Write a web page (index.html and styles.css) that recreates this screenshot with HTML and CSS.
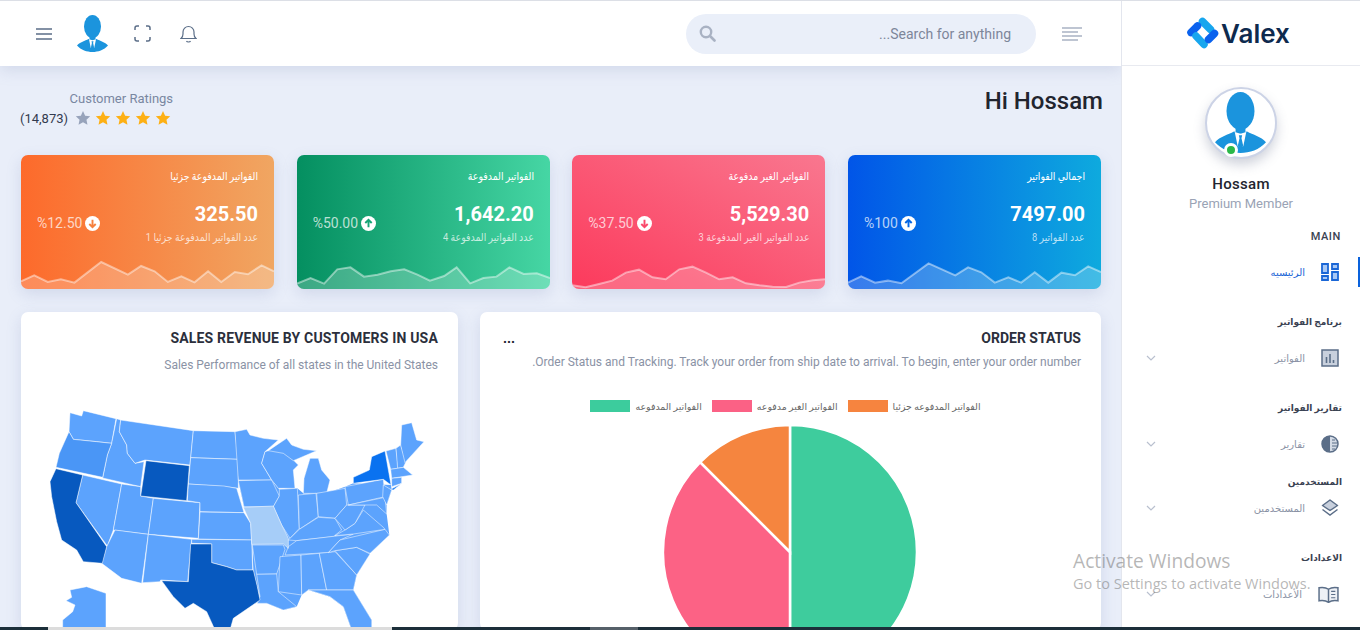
FILE: index.html
```html
<!DOCTYPE html>
<html lang="en">
<head>
<meta charset="utf-8">
<title>Valex Dashboard</title>
<link rel="stylesheet" href="styles.css">
</head>
<body>
<svg class="defs" width="0" height="0" aria-hidden="true">
  <symbol id="man" viewBox="0 0 31 37">
    <ellipse cx="15.5" cy="11.5" rx="8.5" ry="11.5" fill="#1b94dd"/>
    <path d="M12.5 19h6v6h-6z" fill="#1b94dd"/>
    <path d="M0 30.5C3 27 8 26 11.5 24L15.5 25 19.5 24C23 26 28 27 31 30.5 27 35 21 37 15.5 37 10 37 4 35 0 30.5Z" fill="#1b94dd"/>
    <path d="M12 24.300 15.500 25.300 19 24.300 17.200 33H13.800Z" fill="#fff"/>
    <path d="M14.500 26.300h2l-.4 1.700 1 4.500-1.600 2.700-1.600-2.700 1-4.500z" fill="#1b94dd"/>
  </symbol>
  <symbol id="star" viewBox="0 0 24 24">
    <path d="M12 1.500l3.200 7 7.600.9-5.600 5.200 1.500 7.500L12 18.300l-6.700 3.800 1.500-7.500L1.200 9.400l7.600-.9z"/>
  </symbol>
</svg>
<div class="app">
  <main class="main">
    <header class="topbar">
      <div class="top-left">
        <svg class="ic ic-burger" viewBox="0 0 16 12"><path d="M0 1h16M0 6h16M0 11h16" stroke="#5b6e88" stroke-width="1.300" fill="none"/></svg>
        <svg class="top-avatar"><use href="#man"/></svg>
        <svg class="ic ic-full" viewBox="0 0 17 17"><path d="M1 5V3a2 2 0 0 1 2-2h2M12 1h2a2 2 0 0 1 2 2v2M16 12v2a2 2 0 0 1-2 2h-2M5 16H3a2 2 0 0 1-2-2v-2" stroke="#5b6e88" stroke-width="1.500" fill="none"/></svg>
        <svg class="ic ic-bell" viewBox="0 0 17 18"><path d="M1 13.500c1.500-1.200 2-2.500 2-4.500V7a5.500 5.500 0 0 1 11 0v2c0 2 .5 3.300 2 4.500zM6.500 16c.5 1.300 3.500 1.300 4 0" stroke="#5b6e88" stroke-width="1.200" fill="none"/></svg>
      </div>
      <div class="top-right">
        <div class="search">
          <svg class="ic-search" viewBox="0 0 17 17"><circle cx="7" cy="7" r="5.200" stroke="#a9b2c3" stroke-width="2.400" fill="none"/><path d="M11 11l4.500 4.500" stroke="#a9b2c3" stroke-width="2.600" stroke-linecap="round"/></svg>
          <span class="search-text">...Search for anything</span>
        </div>
        <svg class="ic-lines" viewBox="0 0 20 14"><path d="M0 1h20M0 5h16M0 9h20M0 13h16" stroke="#a9b2c3" stroke-width="1.400" fill="none"/></svg>
      </div>
    </header>

    <section class="page-head">
      <div class="ratings">
        <div class="ratings-label">Customer Ratings</div>
        <div class="ratings-row">
          <span class="ratings-count">(14,873)</span>
          <svg class="star star-off"><use href="#star"/></svg>
          <svg class="star"><use href="#star"/></svg>
          <svg class="star"><use href="#star"/></svg>
          <svg class="star"><use href="#star"/></svg>
          <svg class="star"><use href="#star"/></svg>
        </div>
      </div>
      <h1 class="greeting">Hi Hossam</h1>
    </section>

    <section class="stats">
      <article class="stat stat-orange">
        <h6 class="stat-title" dir="rtl">الفواتير المدفوعة جزئيا</h6>
        <div class="stat-body">
          <div class="stat-delta"><span>%12.50</span><svg class="arrow" viewBox="0 0 14 14"><circle cx="7" cy="7" r="7" fill="#fff"/><path d="M7 3.500v7M4 7.500l3 3 3-3" stroke="#f6813f" stroke-width="1.800" fill="none"/></svg></div>
          <div class="stat-nums"><div class="stat-value">325.50</div><div class="stat-sub" dir="rtl">عدد الفواتير المدفوعة جزئيا 1</div></div>
        </div>
        <svg class="spark" viewBox="0 0 710 100" preserveAspectRatio="none"><path class="spark-area" d="M0 76 37 58 75 78 112 70 150 80 225 18 300 56 337 30 375 46 412 78 450 61 487 79 525 46 562 78 600 48 637 55 675 28 710 46V100H0Z"/><path class="spark-line" d="M0 76 37 58 75 78 112 70 150 80 225 18 300 56 337 30 375 46 412 78 450 61 487 79 525 46 562 78 600 48 637 55 675 28 710 46"/></svg>
      </article>
      <article class="stat stat-green">
        <h6 class="stat-title" dir="rtl">الفواتير المدفوعة</h6>
        <div class="stat-body">
          <div class="stat-delta"><span>%50.00</span><svg class="arrow" viewBox="0 0 14 14"><circle cx="7" cy="7" r="7" fill="#fff"/><path d="M7 10.500v-7M4 6.500l3-3 3 3" stroke="#16a577" stroke-width="1.800" fill="none"/></svg></div>
          <div class="stat-nums"><div class="stat-value">1,642.20</div><div class="stat-sub" dir="rtl">عدد الفواتير المدفوعة 4</div></div>
        </div>
        <svg class="spark" viewBox="0 0 710 100" preserveAspectRatio="none"><path class="spark-area" d="M0 83 38 66 76 83 113 40 150 34 188 62 226 56 263 46 301 40 338 56 373 74 413 60 448 34 486 82 523 66 560 62 596 34 636 54 673 52 710 66V100H0Z"/><path class="spark-line" d="M0 83 38 66 76 83 113 40 150 34 188 62 226 56 263 46 301 40 338 56 373 74 413 60 448 34 486 82 523 66 560 62 596 34 636 54 673 52 710 66"/></svg>
      </article>
      <article class="stat stat-red">
        <h6 class="stat-title" dir="rtl">الفواتير الغير مدفوعة</h6>
        <div class="stat-body">
          <div class="stat-delta"><span>%37.50</span><svg class="arrow" viewBox="0 0 14 14"><circle cx="7" cy="7" r="7" fill="#fff"/><path d="M7 3.500v7M4 7.500l3 3 3-3" stroke="#fa4a6c" stroke-width="1.800" fill="none"/></svg></div>
          <div class="stat-nums"><div class="stat-value">5,529.30</div><div class="stat-sub" dir="rtl">عدد الفواتير الغير المدفوعة 3</div></div>
        </div>
        <svg class="spark" viewBox="0 0 710 100" preserveAspectRatio="none"><path class="spark-area" d="M0 88 38 94 76 84 113 74 151 50 188 41 226 64 263 70 301 40 338 32 376 50 413 70 451 64 488 82 526 88 563 92 601 93 638 80 676 73 710 70V100H0Z"/><path class="spark-line" d="M0 88 38 94 76 84 113 74 151 50 188 41 226 64 263 70 301 40 338 32 376 50 413 70 451 64 488 82 526 88 563 92 601 93 638 80 676 73 710 70"/></svg>
      </article>
      <article class="stat stat-blue">
        <h6 class="stat-title" dir="rtl">اجمالي الفواتير</h6>
        <div class="stat-body">
          <div class="stat-delta"><span>%100</span><svg class="arrow" viewBox="0 0 14 14"><circle cx="7" cy="7" r="7" fill="#fff"/><path d="M7 10.500v-7M4 6.500l3-3 3 3" stroke="#0567e4" stroke-width="1.800" fill="none"/></svg></div>
          <div class="stat-nums"><div class="stat-value">7497.00</div><div class="stat-sub" dir="rtl">عدد الفواتير 8</div></div>
        </div>
        <svg class="spark" viewBox="0 0 710 100" preserveAspectRatio="none"><path class="spark-area" d="M0 80 37 61 76 80 112 74 150 82 226 22 301 58 337 34 374 49 412 80 450 64 486 80 524 49 562 80 599 50 637 58 674 31 710 48V100H0Z"/><path class="spark-line" d="M0 80 37 61 76 80 112 74 150 82 226 22 301 58 337 34 374 49 412 80 450 64 486 80 524 49 562 80 599 50 637 58 674 31 710 48"/></svg>
      </article>
    </section>

    <section class="panels">
      <article class="panel panel-map">
        <h4 class="panel-title">SALES REVENUE BY CUSTOMERS IN USA</h4>
        <p class="panel-sub">Sales Performance of all states in the United States</p>
        <svg class="usmap" viewBox="0 0 1260 720">
          <path class="st-base" d="M755 270 778 298 832 295 850 310 920 310 975 290 1000 280 1113 285 1115 300 1100 345 1100 372 1108 435 1050 490 1010 555 1000 600 1055 690 1055 720 995 720 970 650 930 620 865 600 845 615 830 650 790 660 740 640 712 640 720 620 700 540 697 465 695 450 692 400 672 350 655 272Z"/>
          <g class="st">
            <path d="M150 68 185 78 190 62 288 86 275 160 230 155 160 148 147 125Z"/>
            <path d="M290 86 302 90 298 125 320 165 322 190 345 220 372 215 362 290 248 264 262 195 275 160Z"/>
            <path d="M302 90 520 122 510 225 375 210 345 220 322 190 320 165 298 125Z"/>
            <path d="M188 255 305 282 280 420 262 468 168 338Z"/>
            <path d="M305 282 362 290 362 318 400 325 385 433 280 420Z"/>
            <path d="M400 325 540 338 535 445 385 433Z"/>
            <path d="M285 420 385 433 365 580 305 565 245 520 260 470Z"/>
            <path d="M385 433 515 448 503 575 422 570 420 575 368 578Z"/>
            <path d="M520 122 645 125 655 208 512 203Z"/>
            <path d="M512 203 655 208 655 295 615 290 505 282Z"/>
            <path d="M505 282 612 288 650 295 672 368 540 365 540 338 502 332Z"/>
            <path d="M540 366 672 368 692 400 695 450 535 447Z"/>
            <path d="M515 448 695 450 698 540 650 540 620 530 575 518 575 462 515 460Z"/>
            <path d="M645 125 680 118 690 135 730 145 775 150 735 185 725 220 755 270 655 270Z"/>
            <path d="M655 272 755 270 778 318 760 350 672 350Z"/>
            <path d="M697 465 790 465 795 478 770 552 710 553Z"/>
            <path d="M710 553 770 552 775 605 830 650 790 660 740 640 712 640 720 620Z"/>
            <path d="M735 185 770 175 810 200 835 225 820 240 825 295 775 295 755 270 725 220Z"/>
            <path d="M745 182 800 145 815 165 850 178 890 182 860 195 820 212 790 190Z"/>
            <path d="M850 310 852 265 870 205 895 205 905 240 930 270 920 310Z"/>
            <path d="M778 298 832 295 838 415 810 445 785 405 760 350 778 318Z"/>
            <path d="M835 315 888 310 895 380 838 418Z"/>
            <path d="M890 310 975 295 980 345 945 385 895 380Z"/>
            <path d="M805 450 838 418 895 382 945 385 965 420 940 440 830 452Z"/>
            <path d="M805 470 830 452 1000 432 960 450 925 488 795 495Z"/>
            <path d="M780 500 843 495 845 615 775 605Z"/>
            <path d="M843 495 898 490 920 600 865 600 845 615Z"/>
            <path d="M898 490 945 485 1010 555 1000 600 920 600Z"/>
            <path d="M865 600 1000 600 1055 690 1055 720 995 720 970 650 930 620Z"/>
            <path d="M945 482 1010 472 1050 492 1010 555Z"/>
            <path d="M925 488 960 450 1095 418 1108 435 1050 490 1010 472 945 482Z"/>
            <path d="M945 437 975 420 1005 400 1030 360 1090 412 1095 418 1000 432Z"/>
            <path d="M945 385 980 345 1035 345 1005 400 975 420Z"/>
            <path d="M975 290 1090 268 1095 320 985 345Z"/>
            <path d="M985 345 1095 322 1100 372 1070 345 1035 345Z"/>
            <path d="M1090 285 1115 300 1100 345 1088 320Z"/>
            <path d="M1098 183 1128 175 1135 235 1112 238Z"/>
            <path d="M1128 175 1142 165 1158 215 1150 232 1133 235Z"/>
            <path d="M1142 165 1145 105 1175 98 1190 150 1212 155 1160 212 1155 218Z"/>
            <path d="M1112 238 1150 232 1178 255 1115 265Z"/>
            <path d="M1115 265 1145 262 1145 280 1115 290Z"/>
            <path d="M150 600 200 590 258 610 258 720 128 720 128 690 158 665 165 645 138 632 155 622Z"/>
          </g>
          <path class="st-or" d="M147 125 160 148 230 155 275 160 262 195 248 262 108 232 118 190Z"/>
          <path class="st-dark" d="M108 236 188 255 168 338 260 470 247 520 190 515 170 480 125 450 110 395 95 320 90 275Z"/>
          <path class="st-dark" d="M378 212 508 227 500 332 362 318Z"/>
          <path class="st-dark" d="M512 462 575 462 575 518 620 530 650 540 700 540 712 590 720 630 640 685 630 720 585 720 560 665 520 640 495 655 460 620 425 572 505 575Z"/>
          <path class="st-ny" d="M1000 280 1000 262 1048 240 1055 200 1095 183 1113 285 1090 268Z"/>
          <path class="st-ny" d="M1112 298 1143 282 1120 300Z"/>
          <path class="st-mo" d="M670 352 760 348 785 405 805 445 805 475 790 462 695 463 692 400Z"/>
        </svg>
      </article>
      <article class="panel panel-order">
        <div class="order-head"><span class="dots">...</span><h4 class="panel-title">ORDER STATUS</h4></div>
        <p class="panel-sub order-sub">.Order Status and Tracking. Track your order from ship date to arrival. To begin, enter your order number</p>
        <div class="legend">
          <span class="swatch sw-green"></span><span class="legend-text" dir="rtl">الفواتير المدفوعه</span>
          <span class="swatch sw-pink"></span><span class="legend-text" dir="rtl">الفواتير الغير مدفوعه</span>
          <span class="swatch sw-orange"></span><span class="legend-text" dir="rtl">الفواتير المدفوعه جزئيا</span>
        </div>
        <svg class="pie" viewBox="0 0 254 254">
          <path class="pie-green" d="M127 127V1A126 126 0 0 1 127 253Z"/>
          <path class="pie-pink" d="M127 127V253A126 126 0 0 1 37.900 37.900Z"/>
          <path class="pie-orange" d="M127 127 37.900 37.900A126 126 0 0 1 127 1Z"/>
        </svg>
      </article>
    </section>
  </main>

  <aside class="side">
    <div class="brand">
      <svg class="logo" viewBox="0 0 32 32">
        <path d="M15.500 4.500 23.500 12.500" stroke="#17a6ee" stroke-width="7.500" stroke-linecap="round"/>
        <path d="M4 15.500 10.500 9" stroke="#0a62ee" stroke-width="7.500" stroke-linecap="round"/>
        <path d="M9 19 17 27.500" stroke="#17a6ee" stroke-width="7.500" stroke-linecap="round"/>
        <path d="M21.500 22.500 27.500 16.500" stroke="#0a62ee" stroke-width="7.500" stroke-linecap="round"/>
      </svg>
      <span class="brand-name">Valex</span>
    </div>
    <div class="profile">
      <div class="profile-pic">
        <svg class="profile-man"><use href="#man"/></svg>
        <span class="online"></span>
      </div>
      <div class="profile-name">Hossam</div>
      <div class="profile-role">Premium Member</div>
    </div>
    <nav class="nav">
      <div class="nav-label nav-first">MAIN</div>
      <a class="nav-item nav-item-first active">
        <span class="nav-text" dir="rtl">الرئيسيه</span>
        <svg class="nav-ic" viewBox="0 0 18 18"><path d="M1 1h6v9H1zM11 1h6v5h-6zM11 9h6v8h-6zM1 13h6v4H1z" fill="#a8c8f5" stroke="#1a66d6" stroke-width="1.800"/></svg>
      </a>
      <div class="nav-label" dir="rtl">برنامج الفواتير</div>
      <a class="nav-item">
        <svg class="chev" viewBox="0 0 10 6"><path d="M1 1l4 4 4-4" stroke="#b9c0cf" stroke-width="1.200" fill="none"/></svg>
        <span class="nav-text" dir="rtl">الفواتير</span>
        <svg class="nav-ic" viewBox="0 0 18 18"><path d="M1 1h16v16H1z" fill="#c8d0dd" stroke="#5b6e88" stroke-width="1.500"/><path d="M5.500 14V8M9 14V5M12.500 14v-3" stroke="#5b6e88" stroke-width="1.600"/></svg>
      </a>
      <div class="nav-label" dir="rtl">تقارير الفواتير</div>
      <a class="nav-item">
        <svg class="chev" viewBox="0 0 10 6"><path d="M1 1l4 4 4-4" stroke="#b9c0cf" stroke-width="1.200" fill="none"/></svg>
        <span class="nav-text" dir="rtl">تقارير</span>
        <svg class="nav-ic" viewBox="0 0 18 18"><circle cx="9" cy="9" r="8" fill="#d4dbe6" stroke="#5b6e88" stroke-width="1.500"/><path d="M9 1a8 8 0 0 0 0 16z" fill="#5b6e88"/><path d="M11 5h3M11 8h5M11 11h5M11 14h3" stroke="#5b6e88" stroke-width="1"/></svg>
      </a>
      <div class="nav-label nav-tight" dir="rtl">المستخدمين</div>
      <a class="nav-item nav-item-tight">
        <svg class="chev" viewBox="0 0 10 6"><path d="M1 1l4 4 4-4" stroke="#b9c0cf" stroke-width="1.200" fill="none"/></svg>
        <span class="nav-text" dir="rtl">المستخدمين</span>
        <svg class="nav-ic" viewBox="0 0 18 18"><path d="M9 1l7.500 5.500L9 11.500 1.500 6.500z" fill="#c8d0dd" stroke="#5b6e88" stroke-width="1.500" stroke-linejoin="round"/><path d="M1.500 10.500 9 16l7.500-5.500" stroke="#5b6e88" stroke-width="1.500" fill="none"/></svg>
      </a>
      <div class="nav-label" dir="rtl">الاعدادات</div>
      <a class="nav-item">
        <svg class="chev" viewBox="0 0 10 6"><path d="M1 1l4 4 4-4" stroke="#b9c0cf" stroke-width="1.200" fill="none"/></svg>
        <span class="nav-text" dir="rtl">الأعدادات</span>
        <svg class="nav-ic nav-ic-wide" viewBox="0 0 20 16"><path d="M10 3C8 1.500 4 1 1 1.500V14c3-.5 7 0 9 1.500 2-1.500 6-2 9-1.500V1.500C16 1 12 1.500 10 3zM10 3v12.500" fill="#eef1f6" stroke="#5b6e88" stroke-width="1.400"/><path d="M12.500 5h4M12.500 8h4M12.500 11h4" stroke="#5b6e88" stroke-width="1"/></svg>
      </a>
    </nav>
  </aside>
</div>

<div class="activate">
  <div class="activate-title">Activate Windows</div>
  <div class="activate-sub">Go to Settings to activate Windows.</div>
</div>
<div class="taskbar"><span class="tb-light"></span><span class="tb-grey"></span></div>
</body>
</html>
```

FILE: styles.css
```css
* { box-sizing: border-box; }
html, body { margin: 0; height: 630px; overflow: hidden; }
body { font-family: Roboto, "DejaVu Sans", sans-serif; color: #1d212f; background: #e9eef9; position: relative; }
.defs { position: absolute; }
h1, h4, h6, p { margin: 0; }

.app { display: flex; width: 1360px; height: 630px; border-top: 1px solid #dcdfe6; overflow: hidden; }
.main { width: 1121px; flex: none; }

.topbar { height: 65px; background: #fff; display: flex; align-items: center; justify-content: space-between; box-shadow: 0 4px 14px rgba(140,152,190,.25); position: relative; padding: 0 39px 0 36px; }
.top-left { display: flex; align-items: center; }
.ic-burger { width: 16px; height: 12px; }
.top-avatar { width: 31px; height: 37px; margin-left: 25px; }
.ic-full { width: 17px; height: 17px; margin-left: 26px; }
.ic-bell { width: 17px; height: 18px; margin-left: 29px; }
.top-right { display: flex; align-items: center; gap: 26px; }
.search { width: 350px; height: 40px; border-radius: 20px; background: #eaeff9; display: flex; align-items: center; justify-content: space-between; padding: 0 25px 0 13px; }
.ic-search { width: 17px; height: 17px; }
.search-text { font-size: 14px; color: #7d8699; }
.ic-lines { width: 20px; height: 14px; }

.page-head { height: 89px; display: flex; justify-content: space-between; align-items: flex-start; padding: 19px 18px 0 20px; }
.ratings { display: flex; flex-direction: column; align-items: flex-end; margin-top: 5px; }
.ratings-label { font-size: 13px; line-height: 18px; color: #7987a1; margin-right: -2px; }
.ratings-row { display: flex; align-items: center; height: 20px; gap: 4px; }
.ratings-count { font-size: 13px; color: #323a4e; margin-right: 3px; }
.star { width: 16px; height: 16px; fill: #fdb015; }
.star-off { fill: #97a3bb; }
.greeting { font-size: 24px; font-weight: 500; line-height: 32px; color: #22252f; }

.stats { display: grid; grid-template-columns: repeat(4, 253px); column-gap: 22.670px; padding: 0 21px; }
.stat { height: 134px; border-radius: 7px; padding: 14px 16px 0; position: relative; overflow: hidden; color: #fff; box-shadow: 0 5px 15px rgba(100,116,170,.18); }
.stat-orange { background: linear-gradient(to right, #fd6a2b, #f0a662); }
.stat-green { background: linear-gradient(to right, #048f60, #46d6a4); }
.stat-red { background: linear-gradient(to top right, #fc3a5c, #f9778f); }
.stat-blue { background: linear-gradient(to right, #0155e8, #0eaade); }
.stat-title { font-size: 11px; font-weight: 400; line-height: 16px; text-align: right; transform: scaleX(.85); transform-origin: right center; }
.stat-body { display: flex; justify-content: space-between; align-items: center; margin-top: 15px; }
.stat-delta { display: flex; align-items: center; gap: 3px; font-size: 14px; color: rgba(255,255,255,.72); }
.arrow { width: 15px; height: 15px; }
.stat-nums { text-align: right; }
.stat-value { font-size: 20px; font-weight: 700; line-height: 28px; }
.stat-sub { font-size: 11px; line-height: 16px; margin-top: 2px; color: rgba(255,255,255,.72); transform: scaleX(.85); transform-origin: right center; white-space: nowrap; }
.spark { position: absolute; left: 0; bottom: 0; width: 100%; height: 33.300px; }
.spark-area { fill: rgba(255,255,255,.22); }
.spark-line { fill: none; stroke: rgba(255,255,255,.45); stroke-width: 2px; vector-effect: non-scaling-stroke; }

.panels { display: flex; gap: 22px; padding: 23px 20px 0 21px; }
.panel { background: #fff; border-radius: 7px; height: 318px; padding-top: 18px; box-shadow: 0 5px 15px rgba(100,116,170,.18); flex: none; overflow: hidden; }
.panel-map { width: 437px; }
.panel-order { width: 621px; }
.panel-title { font-size: 14px; font-weight: 700; line-height: 17px; text-align: right; color: #2b2f3c; padding-right: 20px; }
.panel-map .panel-title { letter-spacing: .18px; }
.panel-sub { font-size: 12px; line-height: 16px; margin-top: 10px; text-align: right; color: #8a92a5; padding-right: 20px; }
.order-sub { margin-top: 7px; }
.usmap { display: block; width: 420px; height: 240px; margin: 17px 0 0 -1px; }
.st-base { fill: #5ca3fd; }
.st path { fill: #5ca3fd; }
.st path, .st-or, .st-dark, .st-ny, .st-mo { stroke: #fff; stroke-width: 1.500; stroke-linejoin: round; }
.st-or { fill: #4a96f6; }
.st-dark { fill: #0759bf; }
.st-ny { fill: #0a72f0; }
.st-mo { fill: #a6cdf8; }

.order-head { display: flex; justify-content: space-between; align-items: center; padding-left: 23px; }
.dots { font-size: 14px; font-weight: 700; line-height: 17px; }
.legend { display: flex; align-items: center; justify-content: center; height: 12px; margin-top: 30px; }
.swatch { width: 40px; height: 12px; margin-right: 5px; }
.legend-text { font-size: 9.400px; color: #666; margin-right: 10px; white-space: nowrap; }
.sw-green { background: #3ccc9d; }
.sw-pink { background: #fb6185; }
.sw-orange { background: #f6843f; }
.pie { display: block; width: 256px; height: 256px; margin: 12px 0 0 182px; }
.pie path { stroke: #fff; stroke-width: 2.500; }
.pie-green { fill: #3ecc9d; }
.pie-pink { fill: #fc6285; }
.pie-orange { fill: #f5853f; }

.side { width: 239px; flex: none; background: #fff; border-left: 1px solid #e3e6ee; position: relative; }
.brand { height: 65px; display: flex; align-items: center; justify-content: center; gap: 2px; border-bottom: 1px solid #e8eaf0; padding-right: 5px; }
.logo { width: 32px; height: 32px; }
.brand-name { font-family: Inter, sans-serif; font-size: 26px; font-weight: 600; color: #0e2a4e; }
.profile { display: flex; flex-direction: column; align-items: center; padding-top: 21px; }
.profile-pic { width: 72px; height: 72px; border-radius: 50%; border: 2px solid #ccd3e6; background: #fff; position: relative; box-shadow: 0 6px 12px rgba(100,110,140,.3); }
.profile-man { position: absolute; left: 8px; top: 3px; width: 51px; height: 61px; }
.online { position: absolute; left: 17px; top: 54px; width: 14px; height: 14px; border-radius: 50%; background: #2cb84a; border: 3px solid #fff; }
.profile-name { font-size: 15px; font-weight: 500; line-height: 18px; margin-top: 16px; color: #22252f; letter-spacing: .3px; }
.profile-role { font-size: 13px; line-height: 18px; margin-top: 2px; color: #9aa3b5; }
.nav { margin-top: 16px; }
.nav-label { height: 16px; line-height: 16px; font-size: 9px; font-weight: 700; color: #3a4252; text-align: right; padding: 0 18px; margin-top: 27px; }
.nav-first { margin-top: 0; font-size: 11px; font-weight: 500; letter-spacing: .6px; padding-right: 19px; }
.nav-tight { margin-top: 15px; }
.nav-item { height: 30px; margin-top: 13px; display: flex; align-items: center; justify-content: flex-end; gap: 16px; padding: 0 21px 0 24px; position: relative; }
.nav-item-first { margin-top: 12px; }
.nav-item-tight { margin-top: 3px; }
.nav-item.active::after { content: ""; position: absolute; right: 0; top: 0; bottom: 0; width: 2px; background: #0a62dc; }
.nav-text { font-size: 10px; color: #8a92a5; }
.active .nav-text { color: #1a66d6; }
.nav-ic { width: 18px; height: 18px; }
.nav-ic-wide { width: 21px; height: 17px; }
.chev { width: 10px; height: 6px; margin-right: auto; }

.activate { position: absolute; left: 1073px; top: 549px; color: rgba(110,110,110,.5); font-family: "Open Sans", sans-serif; white-space: nowrap; pointer-events: none; }
.activate-title { font-size: 19.200px; line-height: 24px; }
.activate-sub { font-size: 14.500px; line-height: 21px; }
.taskbar { position: absolute; left: 0; right: 0; bottom: 0; height: 3px; background: #1c2f3a; }
.tb-light { position: absolute; left: 48px; width: 344px; top: 0; bottom: 0; background: #dcdcdc; }
.tb-grey { position: absolute; left: 590px; width: 48px; top: 0; bottom: 0; background: #566069; }
```
